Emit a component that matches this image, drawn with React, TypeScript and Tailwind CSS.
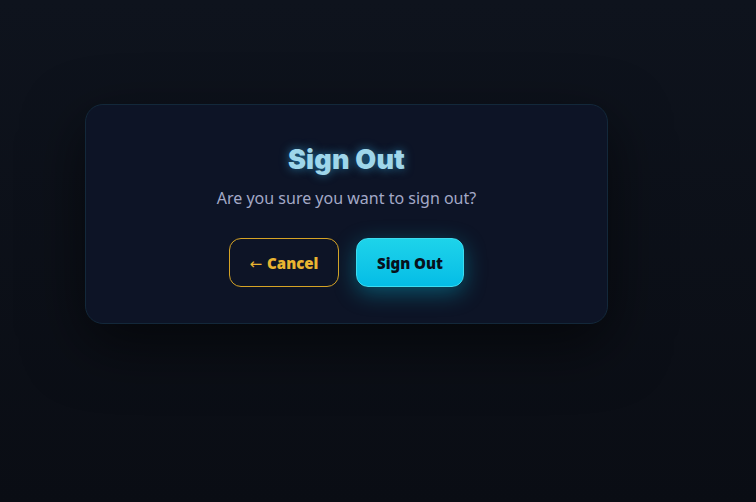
export default function App() {
  return (
    <div
      className="w-[756px] h-[502px] overflow-hidden bg-gradient-to-b from-[#0e131d] to-[#0a0d14]"
      style={{ fontFamily: '"Noto Sans", "Open Sans", sans-serif' }}
    >
      <div className="pt-[104px] pl-[85px]">
        <div className="w-[523px] h-[220px] rounded-[18px] border border-[#13283a] bg-[#0d1426] shadow-[0_20px_60px_rgba(0,0,0,0.55)] flex flex-col items-center pt-[38px]">
          <h2
            className="text-[27px] leading-[34px] font-black text-[#9fd6ea] tracking-[0.2px]"
            style={{ textShadow: '0 0 10px rgba(56,189,248,0.55)', fontFamily: 'Inter, sans-serif' }}
          >
            Sign Out
          </h2>
          <p className="mt-[10px] text-[16px] leading-[22px] text-[#a3a9c7]">
            Are you sure you want to sign out?
          </p>
          <div className="mt-[29px] flex gap-[17px]">
            <button className="w-[110px] h-[49px] rounded-[12px] border border-[#d5a325] bg-transparent text-[#eab431] text-[15px] font-black flex items-center justify-center gap-[5px] pt-[2px]">
              <span className="font-normal text-[15px] leading-none mt-[2px]" style={{ fontFamily: '"DejaVu Sans", sans-serif' }}>←</span>
              <span>Cancel</span>
            </button>
            <button className="w-[108px] h-[49px] rounded-[12px] bg-gradient-to-b from-[#1dd3ea] to-[#04bde6] text-[#07111c] text-[15px] font-black pt-[2px] shadow-[0_6px_22px_rgba(6,182,212,0.4)] border border-[#3ddcf0]">
              Sign Out
            </button>
          </div>
        </div>
      </div>
    </div>
  );
}
